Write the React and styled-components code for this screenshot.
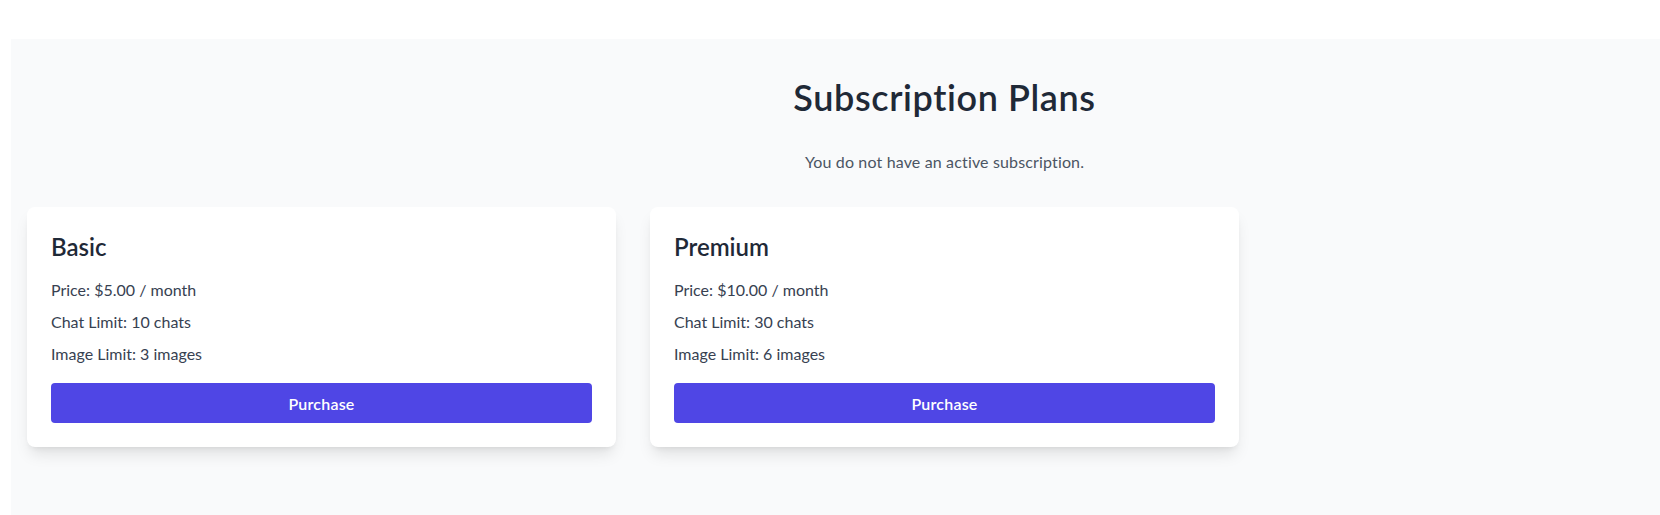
import React from "react";
import styled, { createGlobalStyle } from "styled-components";

const GlobalStyle = createGlobalStyle`
  html, body {
    margin: 0;
    padding: 0;
    background: #ffffff;
    overflow: hidden;
  }
  body {
    font-family: Lato, "Open Sans", Arial, sans-serif;
  }
  * { box-sizing: border-box; }
`;

const Page = styled.div`
  padding: 39px 0 0 11px;
`;

const Section = styled.section`
  width: max-content;
  min-height: 100vh;
  background: #f9fafb;
  padding: 38px 16px 40px;
  display: flex;
  flex-direction: column;
  align-items: center;
`;

const Title = styled.h1`
  margin: 0 0 33px;
  font-size: 36px;
  line-height: 40px;
  font-weight: 600;
  letter-spacing: 0.6px;
  color: #1f2937;
  text-align: center;
`;

const Subtitle = styled.p`
  margin: 0 0 33px;
  font-size: 16px;
  line-height: 24px;
  letter-spacing: 0.15px;
  color: #4b5563;
  text-align: center;
`;

const Grid = styled.div`
  display: grid;
  grid-template-columns: repeat(3, 589px);
  gap: 34px;
  align-items: start;
`;

const Card = styled.div`
  background: #ffffff;
  border-radius: 8px;
  padding: 24px;
  box-shadow: 0 10px 15px -3px rgba(0, 0, 0, 0.1), 0 4px 6px -4px rgba(0, 0, 0, 0.1);
`;

const PlanName = styled.h2`
  margin: 0 0 15px;
  font-size: 24px;
  line-height: 32px;
  font-weight: 600;
  color: #1f2937;
`;

const Detail = styled.p`
  margin: 0 0 8px;
  font-size: 16px;
  line-height: 24px;
  color: #374151;
  &:last-of-type {
    margin-bottom: 17px;
  }
`;

const PurchaseButton = styled.button`
  display: block;
  width: 100%;
  height: 40px;
  border: none;
  border-radius: 4px;
  background: #4f46e5;
  color: #ffffff;
  font-family: inherit;
  font-size: 16px;
  font-weight: 600;
  letter-spacing: 0.2px;
  cursor: pointer;
`;

const plans = [
  { name: "Basic", price: "$5.00", chats: 10, images: 3 },
  { name: "Premium", price: "$10.00", chats: 30, images: 6 },
];

export default function App() {
  return (
    <>
      <GlobalStyle />
      <Page>
        <Section>
          <Title>Subscription Plans</Title>
          <Subtitle>You do not have an active subscription.</Subtitle>
          <Grid>
            {plans.map((p) => (
              <Card key={p.name}>
                <PlanName>{p.name}</PlanName>
                <Detail>Price: {p.price} / month</Detail>
                <Detail>Chat Limit: {p.chats} chats</Detail>
                <Detail>Image Limit: {p.images} images</Detail>
                <PurchaseButton>Purchase</PurchaseButton>
              </Card>
            ))}
          </Grid>
        </Section>
      </Page>
    </>
  );
}
